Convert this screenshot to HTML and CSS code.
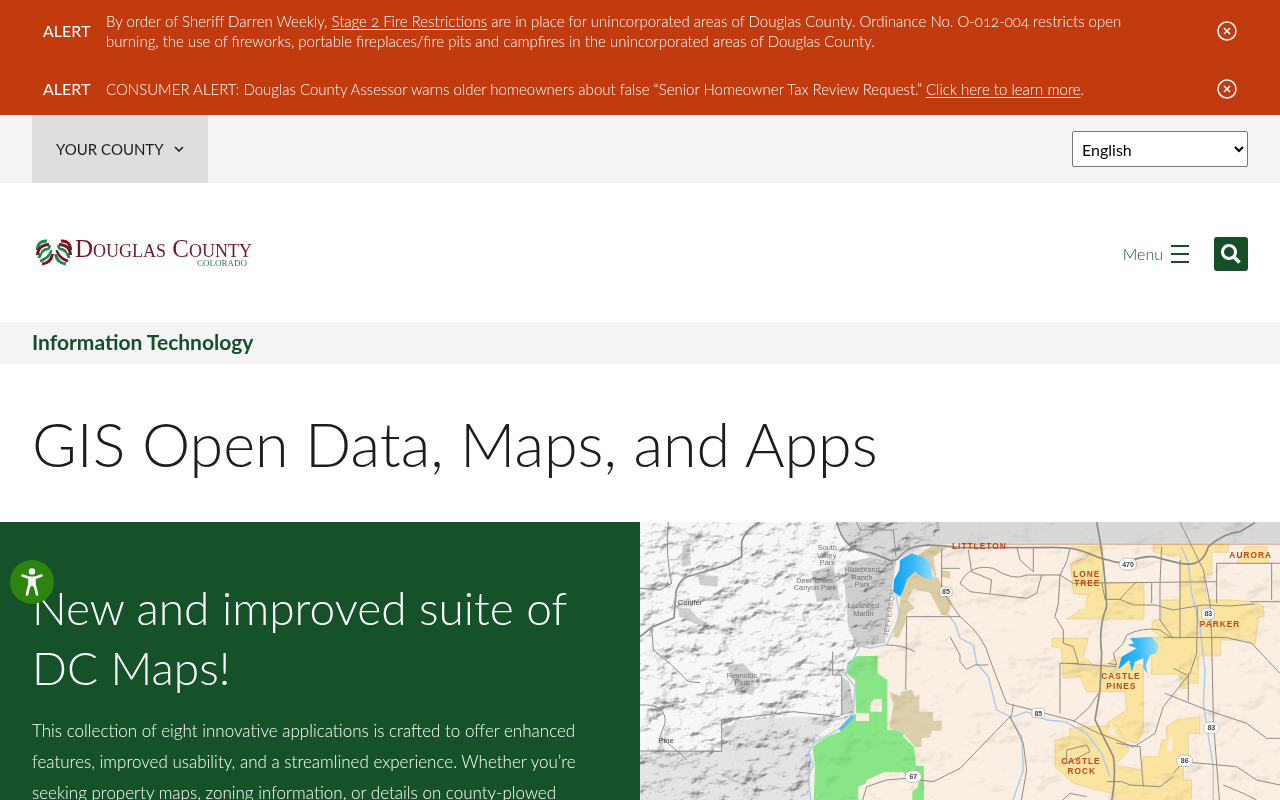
FILE: index.html
```html
<!DOCTYPE html>
<html lang="en">
<head>
<meta charset="utf-8">
<meta name="viewport" content="width=device-width, initial-scale=1">
<title>GIS Open Data, Maps, and Apps - Douglas County</title>
<link rel="stylesheet" href="styles.css">
</head>
<body>
<section class="alerts" aria-label="Alerts">
  <div class="alert">
    <strong class="alert-tag">ALERT</strong>
    <p class="alert-text">By order of Sheriff Darren Weekly, <a href="#">Stage 2 Fire Restrictions</a> are in place for unincorporated areas of Douglas County. Ordinance No. O-012-004 restricts open <br>burning, the use of fireworks, portable fireplaces/fire pits and campfires in the unincorporated areas of Douglas County.</p>
    <button class="alert-close" type="button" aria-label="Dismiss alert"><svg viewBox="0 0 20 20" width="20" height="20"><circle cx="10" cy="10" r="9"/><path d="M7 7l6 6M13 7l-6 6"/></svg></button>
  </div>
  <div class="alert">
    <strong class="alert-tag">ALERT</strong>
    <p class="alert-text">CONSUMER ALERT: Douglas County Assessor warns older homeowners about false “Senior Homeowner Tax Review Request.” <a href="#">Click here to learn more</a>.</p>
    <button class="alert-close" type="button" aria-label="Dismiss alert"><svg viewBox="0 0 20 20" width="20" height="20"><circle cx="10" cy="10" r="9"/><path d="M7 7l6 6M13 7l-6 6"/></svg></button>
  </div>
</section>

<div class="topbar">
  <button class="county" type="button">YOUR COUNTY <svg viewBox="0 0 10 6" width="10" height="6"><path d="M1 1l4 4 4-4" fill="none" stroke="currentColor" stroke-width="1.6"/></svg></button>
  <select class="language" aria-label="Language"><option>English</option></select>
</div>

<header class="header">
  <a class="logo" href="#" aria-label="Douglas County Colorado">
    <svg viewBox="0 0 230 32" width="230" height="32">
      <g fill="none" stroke-width="3">
        <path d="M5.500 13Q5.500 3.500 15 4" stroke="#23854f"/>
        <path d="M5.500 18Q6 8 17 7.500" stroke="#7a1626"/>
        <path d="M7 21Q9 13 15 12Q18 11 17 8" stroke="#23854f"/>
        <path d="M8 24Q17 21 19 13" stroke="#23854f"/>
        <path d="M10 27Q19 26 20.500 17" stroke="#7a1626"/>
        <path d="M38.500 13Q38.500 3.500 29 4" stroke="#7a1626"/>
        <path d="M38.500 18Q38 8 27 7.500" stroke="#7a1626"/>
        <path d="M37 21Q35 13 29 12Q26 11 27 8" stroke="#23854f"/>
        <path d="M36 24Q27 21 25 13" stroke="#7a1626"/>
        <path d="M34 27Q25 26 23.500 17" stroke="#23854f"/>
      </g>
      <path d="M8 16Q9 10 16 10M8 22Q15 20 18 12.500M36 16Q35 10 28 10M36 22Q29 20 26 12.500" fill="none" stroke="#fff" stroke-width="1.2"/>
      <text class="logo-name" x="43" y="20">Douglas County</text>
      <text class="logo-state" x="165" y="29">COLORADO</text>
    </svg>
  </a>
  <div class="actions">
    <button class="menu" type="button">Menu <svg viewBox="0 0 18 18" width="18" height="18"><path d="M0 1h18M0 9h18M0 17h18" stroke="currentColor" stroke-width="2"/></svg></button>
    <button class="search" type="button" aria-label="Search"><svg viewBox="0 0 20 20" width="20" height="20"><circle cx="8" cy="8" r="6.500" fill="none" stroke="#fff" stroke-width="3"/><path d="M12.500 12.500l6 6" stroke="#fff" stroke-width="3.500"/></svg></button>
  </div>
</header>

<nav class="dept"><a href="#">Information Technology</a></nav>

<main>
  <h1>GIS Open Data, Maps, and Apps</h1>
  <section class="hero">
    <div class="intro">
      <h2>New and improved suite of <br>DC Maps!</h2>
      <p>This collection of eight innovative applications is crafted to offer enhanced <br>features, improved usability, and a streamlined experience. Whether you’re <br>seeking property maps, zoning information, or details on county-plowed</p>
    </div>
    <div class="map">
      <svg viewBox="0 6 1920 860" role="img" aria-label="Map of Douglas County">
        <defs>
          <filter id="relief" x="0" y="0" width="100%" height="100%">
            <feTurbulence type="fractalNoise" baseFrequency="0.012 0.018" numOctaves="5" seed="8"/>
            <feDiffuseLighting surfaceScale="38" lighting-color="#fff" diffuseConstant="1.5"><feDistantLight azimuth="225" elevation="52"/></feDiffuseLighting>
          </filter>
          <filter id="soft" x="0" y="0" width="100%" height="100%">
            <feTurbulence type="fractalNoise" baseFrequency="0.006 0.009" numOctaves="4" seed="21"/>
            <feDiffuseLighting surfaceScale="36" lighting-color="#fff" diffuseConstant="1.450"><feDistantLight azimuth="225" elevation="54"/></feDiffuseLighting>
          </filter>
          <clipPath id="west"><path d="M0 6H900V73L810 100L760 240L740 375L660 380L620 450L645 575L515 670L505 866H0z"/></clipPath>
          <clipPath id="east"><path d="M1920 6H900V73L810 100L760 240L740 375L660 380L620 450L645 575L515 670L505 866H1920z"/></clipPath>
          <linearGradient id="lake" x1="0" x2="1"><stop offset="0" stop-color="#0aa2f3"/><stop offset=".5" stop-color="#38b9f8"/><stop offset="1" stop-color="#9bdcf8"/></linearGradient>
        </defs>
        <path d="M0 6H1920V866H0z" fill="#f7f7f7"/>
        <!-- built-up areas and parks west of the county line -->
        <path d="M585 6H1920V80H930L860 78L760 124L690 110L630 75z" fill="#d8d8d8"/>
        <path d="M620 128L690 112L768 125L760 180L735 370L650 382L625 320L612 180zM515 155L580 135L600 240L530 245zM260 435L310 430L345 470L340 525L290 515zM128 75L150 72L152 135L125 140zM172 165L235 168L232 200L180 195zM115 265L150 265L170 290L215 320L190 322L118 290zM245 625L300 610L310 640L250 655zM605 470L650 500L640 575L605 585z" fill="#cfcfcf"/>
        <path d="M0 695L240 690L300 600L460 590L600 590L510 670L520 866H0z" fill="#e4e4e4"/>
        <!-- county ground -->
        <path d="M900 73H1920V866H505L515 670L645 575L620 450L660 380L740 375L760 240L810 100z" fill="#faefe2"/>
        <!-- national forest -->
        <path d="M650 408H713V460L742 480V630H790V650L822 682L828 738H852V866H815L818 810L790 770L735 755L680 780L655 866H520L525 745L518 680L560 650L600 635L648 580L645 480L620 460L622 430z" fill="#88e686"/>
        <path d="M692 548L703 537H726V575H690zM648 580H687V603H648zM732 757H790L812 780L835 785V800L810 820L730 785zM655 800L680 790V866H655z" fill="#faefe2"/>
        <!-- open space -->
        <path d="M808 158L840 155L895 175L935 245L922 288L905 285L870 218L820 207L802 240L825 265L802 278L795 310L776 355L760 350L780 250L783 210zM835 105L880 75L925 80L880 110L890 180L865 125zM905 150L932 155L928 175L902 170z" fill="#dbcea4"/>
        <path d="M750 515L780 530L785 515L815 510L825 530L838 522V575H878L880 602H905V632H875L870 652L845 655V682H825L790 640L748 625L760 555z" fill="#dccfab"/>
        <!-- municipalities -->
        <g fill="#fae4a0" stroke="#ddc27b" stroke-width="1.500">
          <path d="M1295 80H1388V187H1512V297H1280L1310 280L1340 240L1345 225L1300 220L1292 130L1345 110z"/>
          <path d="M1540 73H1765V97H1715V165H1690L1700 240H1775L1845 245L1870 260L1872 290H1855L1845 375L1815 360H1742V408H1675V463H1535V352H1565L1535 330L1540 300L1565 298V240H1620V105H1580L1540 95z"/>
          <path d="M1815 80H1880L1885 130H1790z"/>
          <path d="M1236 355H1345L1330 410L1370 440L1400 430L1440 410L1460 430L1510 435V630L1490 670L1420 650L1400 610L1460 570L1455 515H1340L1320 470L1270 475L1265 385L1236 380zM1620 460H1675V490H1645V505H1622z"/>
          <path d="M1290 625L1345 620L1430 615L1470 690L1425 735L1505 750L1510 710H1555L1565 660H1580V620L1610 600L1680 590V640H1645V725H1630V780H1655V866H1420V820L1365 808L1300 790L1245 740L1245 660L1290 650z"/>
        </g>
        <path d="M1335 225L1310 270L1335 265zM1422 105H1530V187H1422zM1415 610L1430 648L1400 640zM1590 650L1600 655L1595 695L1580 690zM1465 690L1500 695V740L1470 725z" fill="#faefe2"/>
        <g clip-path="url(#west)" class="hills"><rect x="0" y="6" width="900" height="860" filter="url(#relief)"/></g>
        <g clip-path="url(#east)" class="hills gentle"><rect x="500" y="6" width="1420" height="860" filter="url(#soft)"/></g>
        <!-- water -->
        <g fill="none" stroke="#a9c9ee" stroke-width="4">
          <path d="M768 225L780 290L740 374L690 384L660 378L630 435L617 465L645 500L640 580L600 625L520 670L505 700L520 735L505 770L515 866M925 285L945 310L960 355L1000 375L1010 430L1045 470L1070 570L1115 592L1160 575L1220 600L1275 605L1340 640L1385 700L1410 770M1110 592L1145 650L1150 750L1110 866M1625 80L1645 130L1655 220L1680 320L1695 450L1690 550L1705 650L1720 740V866"/>
          <path d="M600 630L640 588" stroke="#62b6f5" stroke-width="10"/>
        </g>
        <path d="M780 230L760 215L762 180L778 150L780 120L800 108L815 100L850 112L870 130L880 180L845 170L825 155L800 178L790 210z" fill="url(#lake)"/>
        <path d="M1470 355L1535 350L1555 375L1550 400L1530 405L1518 435L1522 460L1510 445L1510 415L1485 425L1475 455L1468 420L1435 448L1445 410L1490 385L1463 375L1482 370z" fill="url(#lake)"/>
        <!-- roads -->
        <g class="road">
          <path class="major" d="M590 6C605 65 640 95 690 98C735 110 750 130 772 118C810 65 870 72 960 83"/>
          <path class="major" d="M0 350L35 322L102 293L108 215Q120 170 160 165L265 133L305 110V65Q315 30 360 6"/>
          <path d="M85 6Q75 100 95 190L60 210L0 205M35 325L40 390Q95 430 145 485L180 488M0 555Q80 550 75 610L60 650L120 700L140 720M0 693L245 694V600L460 575L600 590M578 395V465H605V585M650 6L660 30H760L768 110"/>
          <path d="M905 85V210L925 240L960 290H800L797 510M738 375Q790 375 825 395M905 145H960M930 350L960 405M660 866L680 800L740 780L800 775L880 785L920 765L960 745"/>
          <path class="major" d="M1370 6Q1395 130 1400 260Q1375 320 1385 400L1380 510L1365 600L1420 710Q1430 780 1410 866"/>
          <path class="major" d="M960 83H1200C1350 75 1350 115 1405 120C1470 145 1470 105 1540 110C1610 125 1680 165 1705 80Q1750 40 1800 35L1845 8"/>
          <path d="M960 290Q1035 350 1050 420L1100 550L1300 602L1375 640L1425 658L1480 682L1545 640L1570 560L1650 460L1670 400L1672 260M960 190Q990 130 1060 145Q1120 185 1160 165L1260 165L1300 190L1730 185M985 90L995 155L1055 180L1050 220M960 190L990 215L1160 235L1190 220L1205 165M1130 80L1140 120L1180 155V82M1290 85L1280 125L1260 165L1255 250L1245 290L1270 330V370L1300 380L1315 430L1260 430V580M1300 605L1350 560L1375 520M960 405V425L980 448L1005 435H1045M960 745L1115 585L1120 555M1110 590L1150 670L1160 750L1140 866"/>
          <path d="M1385 185L1395 238H1440L1460 215L1490 185M1440 238L1480 255H1545L1600 270L1690 255L1770 258L1845 252M1535 190V250M1560 190V300L1600 355M1570 352L1760 353L1835 370L1920 460M1565 80L1560 190M1620 120V355M1405 430L1430 435L1420 400L1450 370L1460 345Q1510 320 1560 330L1595 355M1430 440L1280 430M1620 6L1690 150L1710 250L1715 350L1720 600L1740 866M1730 130H1920M1730 130V250M1895 130V240M1830 245H1920M1600 445L1640 465M1575 520L1700 570L1820 610L1880 655H1920M1645 460V545M1600 760L1630 725L1790 740L1850 780L1920 795M1240 866L1290 820L1340 830M1400 785H1445L1470 795L1560 800L1600 770M1280 690L1340 675L1350 695L1280 730zM1430 670L1500 680L1510 800M1750 795L1810 820L1850 840"/>
        </g>
        <path d="M960 73H1920" stroke="#c98e6c" stroke-width="2"/>
        <!-- place names -->
        <g class="park"><text x="562" y="90">South</text><text x="560" y="113">Valley</text><text x="562" y="136">Park</text><text x="666" y="157">Hildebrand</text><text x="666" y="179">Ranch</text><text x="667" y="200">Park</text><text x="525" y="190">Deer Creek</text><text x="525" y="211">Canyon Park</text><text x="670" y="265">Lockheed</text><text x="670" y="288">Martin</text><text x="306" y="473">Reynolds</text><text x="306" y="495">Park</text></g>
        <g class="village"><text x="150" y="256">Conifer</text><text x="78" y="668">Pine</text></g>
        <text class="border" transform="translate(744 350) rotate(-81)">JEFFERSON</text>
        <g class="town"><text x="1018" y="86">LITTLETON</text><text x="1340" y="171">LONE</text><text x="1342" y="199">TREE</text><text x="1832" y="114">AURORA</text><text x="1740" y="320">PARKER</text><text x="1443" y="478">CASTLE</text><text x="1444" y="506">PINES</text><text x="1323" y="733">CASTLE</text><text x="1325" y="762">ROCK</text></g>
        <g class="shield"><rect x="900" y="201" width="36" height="28" rx="7"/><rect x="1176" y="565" width="38" height="28" rx="7"/><rect x="1685" y="265" width="38" height="32" rx="7"/><rect x="1438" y="115" width="52" height="35" rx="17"/><rect x="796" y="752" width="48" height="35" rx="17"/><rect x="1691" y="606" width="46" height="35" rx="17"/><rect x="1610" y="705" width="48" height="35" rx="17"/>
          <text x="918" y="223">85</text><text x="1195" y="587">85</text><text x="1705" y="288">83</text><text x="1464" y="140">470</text><text x="820" y="777">67</text><text x="1714" y="631">83</text><text x="1634" y="730">86</text></g>
      </svg>
    </div>
  </section>
</main>

<button class="access" type="button" aria-label="Accessibility options"><svg viewBox="0 0 44 44" width="44" height="44"><circle cx="22" cy="11.500" r="3.200" fill="#fff"/><path d="M12.500 15.500l7 2.500v6l-2.500 10.500M31.500 15.500l-7 2.500v6l2.500 10.500" fill="none" stroke="#fff" stroke-width="2.600" stroke-linecap="round" stroke-linejoin="round"/><path d="M19 16.500h6v7l1 4h-2l-2-2-2 2h-2l1-4z" fill="#fff"/></svg></button>
</body>
</html>
```
FILE: styles.css
```css
* { box-sizing: border-box; }
body { margin: 0; font-family: Lato, "Open Sans", sans-serif; font-size: 16px; line-height: 20px; color: #1d1d1d; background: #fff; }
p, h1, h2 { margin: 0; font-weight: 300; }
button { border: 0; padding: 0; background: none; font: inherit; color: inherit; cursor: pointer; }
svg { display: block; }

.alerts { background: #c13b0f; color: #fff; }
.alert { display: flex; align-items: center; gap: 16px; min-height: 51px; padding: 11px 43px 13px; }
.alert:first-child { min-height: 64px; }
.alert-tag { width: 47px; flex: none; font-weight: 400; }
.alert-text { flex: 1; font-size: 15px; font-variant-numeric: oldstyle-nums; }
.alert-text a { color: inherit; text-underline-offset: 2px; text-decoration-skip-ink: none; }
.alert-close svg { fill: none; stroke: #fff; stroke-width: 1.5; }

.topbar { display: flex; justify-content: space-between; align-items: center; min-height: 68px; padding: 0 32px; background: #f4f4f4; }
.county { align-self: stretch; display: flex; align-items: center; gap: 10px; padding: 0 24px; background: #dedede; font-size: 15px; }
.language { width: 176px; height: 36px; padding: 0 5px; border: 1px solid #767676; border-radius: 2px; background: #fff; font: inherit; color: #000; }

.header { display: flex; justify-content: space-between; align-items: center; padding: 48px 32px; min-height: 139px; }
.logo-name { font-family: "Liberation Serif", serif; font-size: 25px; font-variant: small-caps; fill: #701a24; }
.logo-state { font-family: "Liberation Serif", serif; font-size: 9px; fill: #2b7a55; }
.actions { display: flex; align-items: center; gap: 25px; padding-top: 2px; color: #154f28; }
.menu { display: flex; align-items: center; gap: 8px; font-weight: 300; }
.search { display: grid; place-items: center; width: 34px; height: 34px; border-radius: 3px; background: #154f28; }

.dept { padding: 9px 32px 11px; background: #f4f4f4; font-size: 21px; line-height: 22px; font-weight: 700; }
.dept a { color: #154f28; text-decoration: none; }

h1 { padding: 40px 32px 38px; font-size: 61px; line-height: 80px; }
.hero { display: grid; grid-template-columns: 1fr 1fr; background: #155229; }
.intro { padding: 56px 32px 0; color: #fff; }
.intro h2 { font-size: 46px; line-height: 60px; white-space: nowrap; }
.intro p { margin-top: 17px; font-size: 17px; line-height: 31px; white-space: nowrap; }
.map { overflow: hidden; }
.map svg { width: 100%; height: auto; }

.hills { mix-blend-mode: multiply; opacity: 0.4; }
.gentle { opacity: 0.2; }
.road { fill: none; stroke: #918c86; stroke-width: 3; stroke-linejoin: round; }
.major { stroke-width: 5; }
.map text { font-family: "Liberation Sans", Arial, sans-serif; font-size: 21px; text-anchor: middle; }
.map .park text { font-size: 22px; }
.park { fill: #747474; }
.village { fill: #3c3c3c; }
.map .village text { font-size: 23px; }
.map .border { fill: #8b8b8b; text-anchor: start; letter-spacing: 2px; }
.map .town text { font-size: 25px; font-weight: 700; fill: #b9471c; letter-spacing: 3px; }
.shield rect { fill: #fff; stroke: #aaa; stroke-width: 2; }
.map .shield text { font-weight: 700; fill: #444; }

.access { position: fixed; left: 10px; top: 560px; width: 44px; height: 44px; border-radius: 50%; background: #2c850f; }
```
